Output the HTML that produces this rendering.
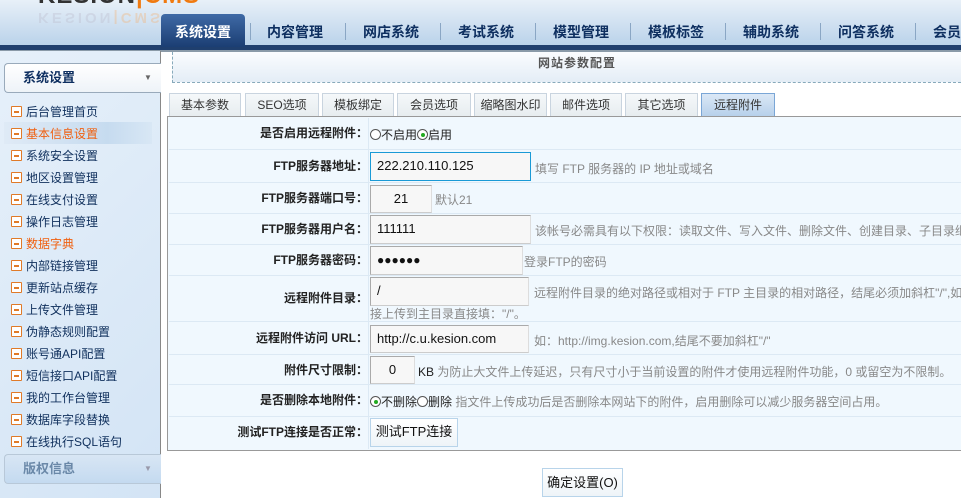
<!DOCTYPE html>
<html><head><meta charset="utf-8"><style>
*{margin:0;padding:0;box-sizing:border-box}
body{width:961px;height:498px;overflow:hidden;position:relative;background:#fff;font-family:"Liberation Sans","Noto Sans CJK SC",sans-serif;font-size:12px;color:#333}
.a{position:absolute}
#hdr{left:0;top:0;width:961px;height:46px;background:linear-gradient(#e8f0f8,#b9d2ea)}
#bar{left:0;top:45px;width:961px;height:5px;background:#1f3f6e}
.nav{top:22px;font-size:14px;font-weight:bold;color:#0e2f60;white-space:nowrap}
.sep{top:23px;width:1px;height:17px;background:#8aa6c4}
#act{left:161px;top:14px;width:84px;height:33px;background:linear-gradient(#3f6aa6,#1b3e73);border-radius:4px 4px 0 0;color:#fff;font-size:14px;font-weight:bold;text-align:center;line-height:36px}
#side{left:0;top:51px;width:161px;height:447px;background:linear-gradient(135deg,#e6f0fa,#d3e4f5);border-right:1px solid #888}
.mi{left:11px;font-size:12px;color:#0f2f5c;white-space:nowrap}
.mi i{display:inline-block;width:11px;height:11px;border:1px solid #e07a28;background:#fff;vertical-align:-1px;margin-right:4px;position:relative;border-radius:1px}
.mi i:after{content:"";position:absolute;left:2px;top:4px;width:5px;height:1px;background:#e07a28;border-top:1px solid #e07a28}
.tab{top:93px;height:24px;border:1px solid #c9d4df;border-bottom:none;background:linear-gradient(#f5f8fa,#e6ecef);text-align:center;line-height:22px;font-size:12px;color:#333}
.row{left:169px;width:792px;border-bottom:1px solid #dce9f4;background:#f0f8fe}
.lb{position:absolute;left:0;width:200px;text-align:right;font-weight:bold;color:#222;font-size:12px;border-right:1px solid #dce9f4;height:100%}
.inp{position:absolute;border:1px solid #aaa;border-right-color:#ddd;border-bottom-color:#ccc;background:#f7f7f7;font-size:13px;color:#111;padding-left:6px;line-height:26px}
.tip{position:absolute;color:#888;font-size:12px;white-space:nowrap}
.rd{display:inline-block;width:11px;height:11px;border:1px solid #555;border-radius:50%;background:#fff;vertical-align:-1px;position:relative}
.rd.on:after{content:"";position:absolute;left:3px;top:3px;width:4px;height:4px;border-radius:50%;background:#2a2}
</style></head><body>
<div class="a" id="hdr"></div>
<div class="a" style="left:38px;top:-18px;font-size:24px;font-weight:bold;color:#333;letter-spacing:1px">KESION<span style="color:#f07a10">|CMS</span></div>
<div class="a" style="left:38px;top:9px;font-size:15px;font-weight:bold;color:#bbc;letter-spacing:3px;opacity:.35;transform:scaleY(-1)">KESION<span style="color:#f5b070">|CMS</span></div>
<div class="a" id="bar"></div>
<div class="a" id="act">系统设置</div>
<div class="a nav" style="left:267px">内容管理</div><div class="a sep" style="left:250px"></div>
<div class="a nav" style="left:363px">网店系统</div><div class="a sep" style="left:345px"></div>
<div class="a nav" style="left:458px">考试系统</div><div class="a sep" style="left:440px"></div>
<div class="a nav" style="left:553px">模型管理</div><div class="a sep" style="left:535px"></div>
<div class="a nav" style="left:648px">模板标签</div><div class="a sep" style="left:630px"></div>
<div class="a nav" style="left:743px">辅助系统</div><div class="a sep" style="left:725px"></div>
<div class="a nav" style="left:838px">问答系统</div><div class="a sep" style="left:820px"></div>
<div class="a nav" style="left:933px">会员</div><div class="a sep" style="left:915px"></div>
<div class="a" style="left:0;top:50px;width:961px;height:2px;background:#8a9aa8"></div>

<div class="a" id="side"></div>
<div class="a" style="left:4px;top:63px;width:157px;height:30px;border:1px solid #9ab;border-right:none;border-radius:4px 0 0 4px;background:linear-gradient(#fff,#eef3f8);font-weight:bold;color:#0e2f60;font-size:13px;line-height:28px;padding-left:18px">系统设置<span style="position:absolute;left:139px;top:0;font-size:8px;color:#666">▼</span></div>
<div class="a" style="left:4px;top:454px;width:157px;height:30px;border:1px solid #b8c8d8;border-right:none;border-radius:4px 0 0 4px;background:linear-gradient(#d8e6f4,#c4daf0);font-weight:bold;color:#6a88a8;font-size:13px;line-height:28px;padding-left:18px">版权信息<span style="position:absolute;left:139px;top:0;font-size:8px;color:#99a">▼</span></div>
<div class="a" style="left:4px;top:122px;width:148px;height:22px;background:linear-gradient(90deg,#dfeaf6,#c6dbef 70%,#d8e7f5)"></div>
<div class="a mi" style="top:103px"><i></i>后台管理首页</div>
<div class="a mi" style="top:125px;color:#f06010"><i></i>基本信息设置</div>
<div class="a mi" style="top:147px"><i></i>系统安全设置</div>
<div class="a mi" style="top:169px"><i></i>地区设置管理</div>
<div class="a mi" style="top:191px"><i></i>在线支付设置</div>
<div class="a mi" style="top:213px"><i></i>操作日志管理</div>
<div class="a mi" style="top:235px;color:#f06010"><i></i>数据字典</div>
<div class="a mi" style="top:257px"><i></i>内部链接管理</div>
<div class="a mi" style="top:279px"><i></i>更新站点缓存</div>
<div class="a mi" style="top:301px"><i></i>上传文件管理</div>
<div class="a mi" style="top:323px"><i></i>伪静态规则配置</div>
<div class="a mi" style="top:345px"><i></i>账号通API配置</div>
<div class="a mi" style="top:367px"><i></i>短信接口API配置</div>
<div class="a mi" style="top:389px"><i></i>我的工作台管理</div>
<div class="a mi" style="top:411px"><i></i>数据库字段替换</div>
<div class="a mi" style="top:433px"><i></i>在线执行SQL语句</div>

<div class="a" style="left:172px;top:52px;width:789px;height:31px;border-left:1px dashed #8ab;border-bottom:1px dashed #8ab;background:linear-gradient(#fafcfe,#e4edf6)"></div>
<div class="a" style="left:538px;top:54px;font-weight:bold;color:#555;font-size:12px;letter-spacing:1px">网站参数配置</div>

<div class="a tab" style="left:169px;width:72px">基本参数</div>
<div class="a tab" style="left:245px;width:74px">SEO选项</div>
<div class="a tab" style="left:322px;width:72px">模板绑定</div>
<div class="a tab" style="left:397px;width:74px">会员选项</div>
<div class="a tab" style="left:474px;width:73px">缩略图水印</div>
<div class="a tab" style="left:550px;width:72px">邮件选项</div>
<div class="a tab" style="left:625px;width:73px">其它选项</div>
<div class="a tab" style="left:701px;width:74px;border-color:#7aa6d6;background:linear-gradient(#dbe8f6,#b5cfea)">远程附件</div>
<div class="a" style="left:167px;top:116px;width:794px;height:335px;border:1px solid #999;border-right:none;background:#f0f8fe"></div>

<div class="a row" style="top:118px;height:32px"><div class="lb" style="line-height:31px">是否启用远程附件：</div><div class="tip" style="left:201px;top:8px;color:#222;font-size:12px"><span class="rd"></span>不启用<span class="rd on"></span>启用</div></div>
<div class="a row" style="top:150px;height:33px"><div class="lb" style="line-height:32px">FTP服务器地址：</div><div class="inp" style="left:201px;top:2px;width:161px;height:29px;border:1px solid #1a9ad6;background:#f7f7f7">222.210.110.125</div><div class="tip" style="left:366px;top:10px">填写 FTP 服务器的 IP 地址或域名</div></div>
<div class="a row" style="top:183px;height:31px"><div class="lb" style="line-height:30px">FTP服务器端口号：</div><div class="inp" style="left:201px;top:2px;width:62px;height:28px;text-align:center;padding:0">21</div><div class="tip" style="left:266px;top:8px">默认21</div></div>
<div class="a row" style="top:214px;height:31px"><div class="lb" style="line-height:30px">FTP服务器用户名：</div><div class="inp" style="left:201px;top:1px;width:161px;height:29px">111111</div><div class="tip" style="left:366px;top:8px">该帐号必需具有以下权限：读取文件、写入文件、删除文件、创建目录、子目录继承</div></div>
<div class="a row" style="top:245px;height:31px"><div class="lb" style="line-height:30px">FTP服务器密码：</div><div class="inp" style="left:201px;top:1px;width:153px;height:29px;font-size:12px">●●●●●●</div><div class="tip" style="left:355px;top:8px">登录FTP的密码</div></div>
<div class="a row" style="top:276px;height:46px"><div class="lb" style="line-height:44px">远程附件目录：</div><div class="inp" style="left:201px;top:1px;width:159px;height:29px">/</div><div class="tip" style="left:365px;top:8px">远程附件目录的绝对路径或相对于 FTP 主目录的相对路径，结尾必须加斜杠"/",如果直</div><div class="tip" style="left:201px;top:29px">接上传到主目录直接填："/"。</div></div>
<div class="a row" style="top:322px;height:33px"><div class="lb" style="line-height:32px">远程附件访问 URL：</div><div class="inp" style="left:201px;top:3px;width:159px;height:28px">http://c.u.kesion.com</div><div class="tip" style="left:365px;top:10px">如：http://img.kesion.com,结尾不要加斜杠"/"</div></div>
<div class="a row" style="top:355px;height:30px"><div class="lb" style="line-height:30px">附件尺寸限制：</div><div class="inp" style="left:201px;top:1px;width:45px;height:28px;text-align:center;padding:0">0</div><div class="tip" style="left:249px;top:8px"><span style="color:#222">KB</span> 为防止大文件上传延迟，只有尺寸小于当前设置的附件才使用远程附件功能，0 或留空为不限制。</div></div>
<div class="a row" style="top:385px;height:32px"><div class="lb" style="line-height:31px">是否删除本地附件：</div><div class="tip" style="left:201px;top:8px"><span style="color:#222"><span class="rd on"></span>不删除<span class="rd"></span>删除</span> 指文件上传成功后是否删除本网站下的附件，启用删除可以减少服务器空间占用。</div></div>
<div class="a row" style="top:417px;height:32px;border-bottom:none"><div class="lb" style="line-height:31px">测试FTP连接是否正常：</div><div class="inp" style="left:201px;top:1px;width:88px;height:29px;border:1px solid #b8d4ea;background:linear-gradient(#fff,#eef4f8);padding:0;text-align:center;font-size:13px">测试FTP连接</div></div>

<div class="a" style="left:542px;top:468px;width:81px;height:29px;border:1px solid #b8d4ea;background:linear-gradient(#fff,#eef4f8);text-align:center;line-height:28px;font-size:13px;color:#111">确定设置(O)</div>
</body></html>
